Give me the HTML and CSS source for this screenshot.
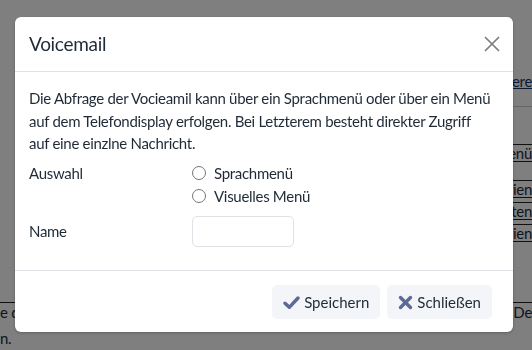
FILE: index.html
```html
<!DOCTYPE html>
<html lang="de">
<head>
<meta charset="utf-8">
<title>Voicemail</title>
<link rel="stylesheet" href="styles.css">
</head>
<body>
<div class="page">
  <div class="page-top">
    <main class="page-main"></main>
    <aside class="page-side">
      <a class="side-link" href="#">Weitere</a>
      <div class="side-group">
        <div class="side-row side-row-gap"></div>
        <div class="side-row"><span class="side-btn">Menü</span></div>
        <div class="side-row side-row-gap"></div>
        <div class="side-row"><span class="side-btn">Kategorien</span></div>
        <div class="side-row"><span class="side-btn">Listen</span></div>
        <div class="side-row"><span class="side-btn">Kategorien</span></div>
      </div>
    </aside>
  </div>
  <div class="page-footer">
    <p class="page-text"><span class="left">e d</span><span class="right">t. De</span></p>
    <p class="page-text"><span class="left">n.</span></p>
  </div>
</div>

<div class="backdrop"></div>
<div class="modal" role="dialog" aria-labelledby="vm-title">
  <div class="modal-header">
    <h5 class="modal-title" id="vm-title">Voicemail</h5>
    <button class="close" type="button" aria-label="Schließen">
      <svg width="16" height="16" viewBox="0 0 16 16"><path d="M1 1 L15 15 M15 1 L1 15" stroke="#7a7a7a" stroke-width="1.6" fill="none"/></svg>
    </button>
  </div>
  <div class="modal-body">
    <p class="intro">Die Abfrage der Vocieamil kann über ein Sprachmenü oder über ein Menü auf dem Telefondisplay erfolgen. Bei Letzterem besteht direkter Zugriff <span class="nowrap">auf eine einzlne Nachricht.</span></p>
    <div class="form-row">
      <div class="form-label">Auswahl</div>
      <div class="form-control-col">
        <label class="radio"><span class="radio-dot"></span>Sprachmenü</label>
        <label class="radio"><span class="radio-dot"></span>Visuelles Menü</label>
      </div>
    </div>
    <div class="form-row form-row-name">
      <div class="form-label">Name</div>
      <div class="form-control-col">
        <input class="text-input" type="text">
      </div>
    </div>
  </div>
  <div class="modal-footer">
    <button class="btn" type="button">
      <svg class="btn-icon" width="17" height="15" viewBox="0 0 17 15"><path d="M2 8.2 L6.3 12.3 L15 3" stroke="#5b6a97" stroke-width="3.4" stroke-linecap="round" stroke-linejoin="round" fill="none"/></svg>
      Speichern
    </button>
    <button class="btn" type="button">
      <svg class="btn-icon" width="15" height="15" viewBox="0 0 15 15"><path d="M2.5 2.5 L12.5 12.5 M12.5 2.5 L2.5 12.5" stroke="#5b6a97" stroke-width="3.4" stroke-linecap="round" fill="none"/></svg>
      Schließen
    </button>
  </div>
</div>
</body>
</html>
```
FILE: styles.css
```css
* { box-sizing: border-box; }
html, body { margin: 0; padding: 0; }
body {
  font-family: "Lato", "Noto Sans", sans-serif;
  font-size: 15px;
  line-height: 1.5;
  letter-spacing: -0.3px;
  color: #1f2a37;
  background: #ffffff;
  width: 532px;
  height: 350px;
  overflow: hidden;
}

/* background page */
.page { width: 532px; }
.page-top {
  display: flex;
  height: 303px;
  border-bottom: 1px solid #222;
}
.page-main { flex: 1; }
.page-side {
  width: 80px;
  padding-top: 70px;
  display: flex;
  flex-direction: column;
  align-items: flex-end;
}
.side-link { color: #1b3a6b; text-decoration: underline; line-height: 22px; }
.side-group { width: 100%; margin-top: 14px; border-top: 1px solid #ccc; padding-top: 23px; }
.side-row {
  display: flex;
  justify-content: flex-end;
  overflow: hidden;
  height: 18px;
  line-height: 16px;
  margin-bottom: 4px;
  border-top: 1px solid #222;
  border-bottom: 1px solid #222;
}
.side-row-gap { border: none; height: 0; margin-bottom: 14px; }
.side-btn { white-space: nowrap; }
.page-text { margin: 0; display: flex; justify-content: space-between; line-height: 24px; }
.page-text:first-child { margin-top: -3px; }
.page-text + .page-text { margin-top: 2px; }

/* modal */
.backdrop {
  position: fixed;
  inset: 0;
  background: rgba(0, 0, 0, 0.5);
}
.modal {
  position: fixed;
  left: 15px;
  top: 17px;
  width: 498px;
  height: 315px;
  background: #fff;
  border-radius: 6px;
  box-shadow: 0 1px 3px rgba(0,0,0,0.25);
  display: flex;
  flex-direction: column;
  color: #1f2a37;
}
.modal-header {
  display: flex;
  align-items: center;
  justify-content: space-between;
  height: 55px;
  padding: 0 13px 0 14px;
  border-bottom: 1px solid #dee2e6;
}
.modal-title {
  margin: 0;
  font-size: 19px;
  font-weight: 400;
  line-height: 1.2;
}
.close {
  border: 0;
  background: none;
  padding: 0;
  width: 16px;
  height: 16px;
  display: flex;
}
.modal-body {
  padding: 15px 14px 0 14px;
  flex: 1;
}
.intro { margin: 0 0 7px 0; }
.nowrap { white-space: nowrap; }
.form-row { display: flex; }
.form-label { width: 163px; line-height: 22px; }
.form-control-col { display: flex; flex-direction: column; }
.radio { display: flex; align-items: center; line-height: 23px; }
.radio-dot {
  width: 14px; height: 14px;
  border: 1px solid #767676;
  border-radius: 50%;
  margin-right: 8px;
  background: #fff;
}
.form-row-name { margin-top: 8px; align-items: center; }
.text-input {
  width: 102px;
  height: 31px;
  border: 1px solid #dee2e6;
  border-radius: 5px;
  font: inherit;
}
.modal-footer {
  border-top: 1px solid #dee2e6;
  display: flex;
  justify-content: flex-end;
  gap: 7px;
  padding: 14px 21px 13px;
}
.btn {
  display: flex;
  align-items: center;
  gap: 4px;
  height: 34px;
  padding: 0 11px;
  border: 0;
  border-radius: 5px;
  background: #f3f5f8;
  font: inherit;
  color: #1f2a37;
}
```
